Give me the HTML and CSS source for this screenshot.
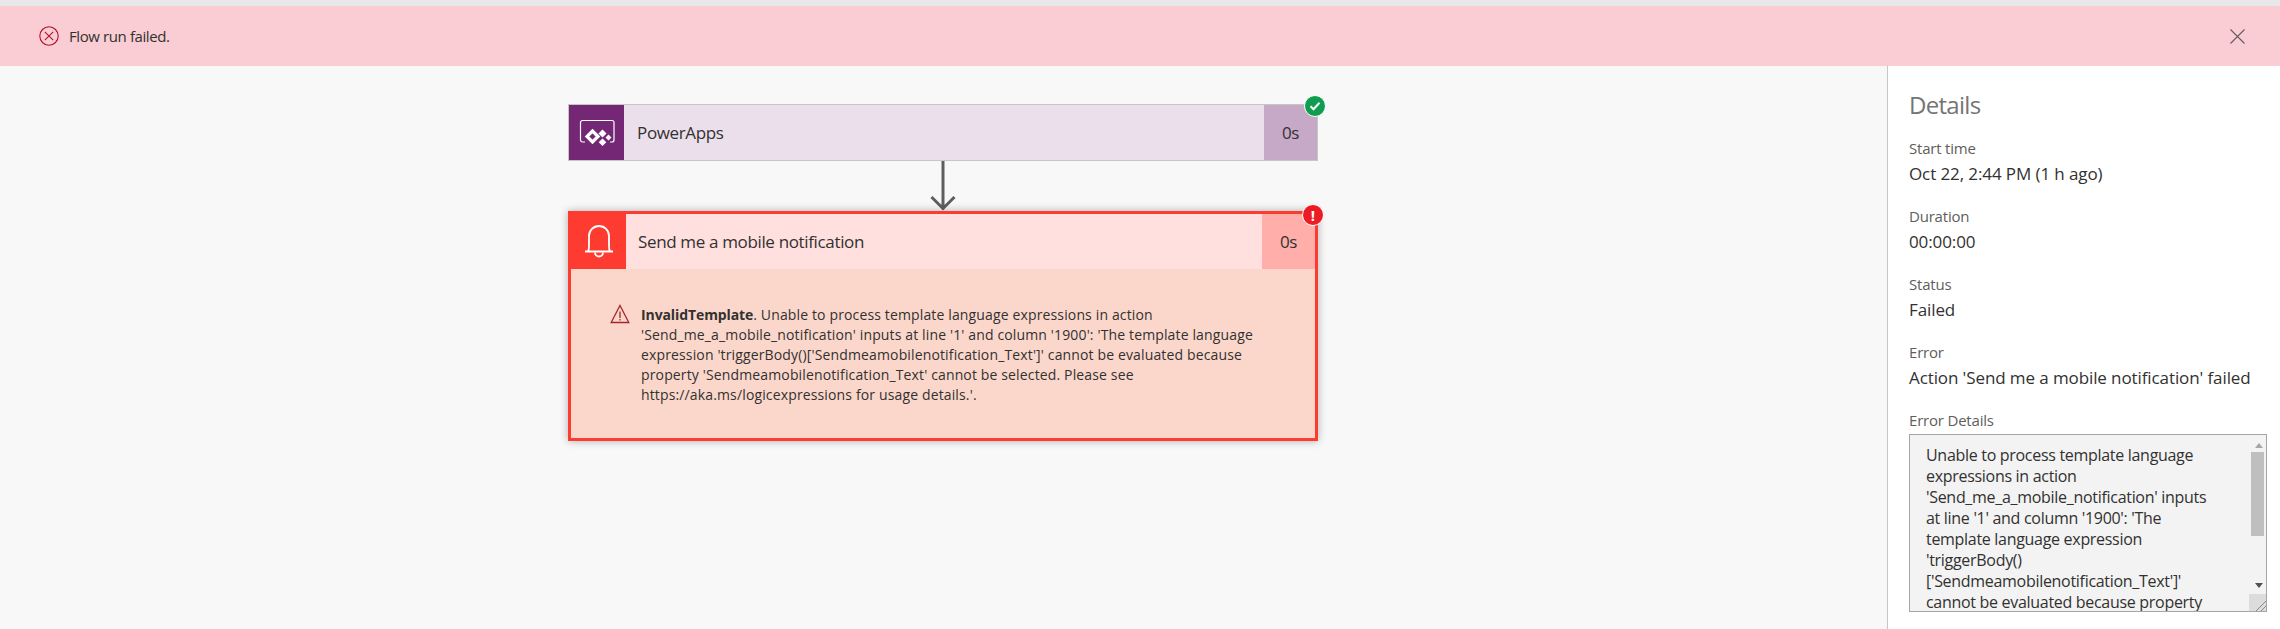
FILE: index.html
```html
<!DOCTYPE html>
<html lang="en">
<head>
<meta charset="utf-8">
<title>Flow run failed</title>
<link rel="stylesheet" href="styles.css">
</head>
<body>
<div class="topstrip"></div>
<header class="banner">
  <svg class="banner-icon" width="20" height="20" viewBox="0 0 20 20"><circle cx="10" cy="10" r="9.200" fill="none" stroke="#b3122a" stroke-width="1.100"/><path d="M5.800 5.800l8.400 8.400M14.200 5.800l-8.400 8.400" stroke="#b3122a" stroke-width="1.100"/></svg>
  <span class="banner-text">Flow run failed.</span>
  <svg class="banner-close" width="15" height="15" viewBox="0 0 15 15"><path d="M.5.5l14 14M14.500.5l-14 14" stroke="#605e5c" stroke-width="1.100"/></svg>
</header>
<div class="main">
  <section class="canvas">
    <div class="card card-ok">
      <div class="tile tile-purple">
        <svg width="36" height="28" viewBox="0 0 36 28" fill="none"><path d="M6 23H3.500a2 2 0 0 1-2-2V3.500a2 2 0 0 1 2-2H33a2 2 0 0 1 2 2V21a2 2 0 0 1-2 2h-2" stroke="#fff" stroke-width="1.200"/><path d="M13.500 12l5.500 5.500-5.500 5.500L8 17.500z" stroke="#fff" stroke-width="3.200"/><path d="M23.500 10.500l4 4-4 4-4-4zM23.500 19.500l3.800 3.800-3.800 3.800-3.800-3.800zM29.500 15.500l3 3-3 3-3-3z" fill="#fff"/></svg>
      </div>
      <div class="card-title">PowerApps</div>
      <div class="dur dur-purple">0s</div>
      <span class="badge badge-ok"><svg width="12" height="10" viewBox="0 0 12 10"><path d="M1.500 5.200l3 3 6-6.400" fill="none" stroke="#fff" stroke-width="2"/></svg></span>
    </div>
    <svg class="arrow" width="26" height="50" viewBox="0 0 26 50"><path d="M13 0v47M1.500 36L13 47.500 24.500 36" fill="none" stroke="#605e5c" stroke-width="3"/></svg>
    <div class="card card-err">
      <div class="err-head">
        <div class="tile tile-red">
          <svg width="28" height="34" viewBox="0 0 28 34" fill="none" stroke="#fff" stroke-width="1.800"><path d="M0 26.500h28M3 26c1-1 1-3 1-5V11a10 10 0 0 1 20 0v10c0 2 0 4 1 5"/><path d="M10 27.500a4 4 0 0 0 8 0"/></svg>
        </div>
        <div class="card-title card-title-err">Send me a mobile notification</div>
        <div class="dur dur-red">0s</div>
      </div>
      <div class="err-body">
        <svg class="warn" width="20" height="20" viewBox="0 0 20 20" fill="none" stroke="#a4262c" stroke-width="1.300"><path d="M10 1.500L18.800 18.500H1.200z"/><path d="M10 7.500v6.500M10 15v1.500"/></svg>
        <p class="err-text"><b>InvalidTemplate</b>. Unable to process template language expressions in action<br>'Send_me_a_mobile_notification' inputs at line '1' and column '1900': 'The template language<br>expression 'triggerBody()['Sendmeamobilenotification_Text']' cannot be evaluated because<br>property 'Sendmeamobilenotification_Text' cannot be selected. Please see<br>https://aka.ms/logicexpressions for usage details.'.</p>
      </div>
      <span class="badge badge-err">!</span>
    </div>
  </section>
  <aside class="panel">
    <h2 class="panel-title">Details</h2>
    <div class="field"><div class="label">Start time</div><div class="value">Oct 22, 2:44 PM (1 h ago)</div></div>
    <div class="field"><div class="label">Duration</div><div class="value">00:00:00</div></div>
    <div class="field"><div class="label">Status</div><div class="value">Failed</div></div>
    <div class="field"><div class="label">Error</div><div class="value">Action 'Send me a mobile notification' failed</div></div>
    <div class="field"><div class="label">Error Details</div>
      <div class="errbox">
        <div class="errbox-text">Unable to process template language<br>expressions in action<br>'Send_me_a_mobile_notification' inputs<br>at line '1' and column '1900': 'The<br>template language expression<br>'triggerBody()<br>['Sendmeamobilenotification_Text']'<br>cannot be evaluated because property</div>
        <div class="sb">
          <svg class="sb-up" width="8" height="5" viewBox="0 0 8 5"><path d="M4 0l4 5H0z" fill="#a6a6a6"/></svg>
          <div class="sb-thumb"></div>
          <svg class="sb-down" width="8" height="5" viewBox="0 0 8 5"><path d="M0 0h8L4 5z" fill="#505050"/></svg>
          <div class="sb-corner"><svg width="11" height="11" viewBox="0 0 11 11"><path d="M1 11L11 1M6 11l5-5" stroke="#8a8a8a" stroke-width="1"/></svg></div>
        </div>
      </div>
    </div>
  </aside>
</div>
</body>
</html>
```
FILE: styles.css
```css
* { box-sizing: border-box; }
html, body { margin: 0; height: 629px; overflow: hidden; }
body { font-family: "Open Sans", "Noto Sans", sans-serif; color: #323130; background: #f8f8f8; }
.topstrip { height: 6px; background: #e8e8e8; }
.banner { height: 60px; background: #f9cdd3; display: flex; align-items: center; padding: 0 35px 0 39px; }
.banner-icon { flex: none; margin-right: 10px; }
.banner-text { font-size: 15px; letter-spacing: -.4px; flex: 1; }
.banner-close { flex: none; }
.main { display: flex; height: 563px; }
.canvas { width: 1887px; flex: none; display: flex; flex-direction: column; align-items: center; padding: 38px 1px 0 0; }
.card { width: 750px; position: relative; display: flex; }
.card-ok { height: 57px; background: #ebdfec; border: 1px solid #c8c6c4; }
.tile { flex: none; display: flex; align-items: center; justify-content: center; }
.tile-purple { width: 55px; background: #742774; }
.card-title { flex: 1; font-size: 17px; letter-spacing: -.35px; padding-left: 13px; display: flex; align-items: center; }
.card-title-err { padding-left: 12px; }
.dur { flex: none; display: flex; align-items: center; justify-content: center; font-size: 17px; letter-spacing: -.3px; }
.dur-purple { width: 53px; background: #c6a9c6; }
.arrow { display: block; flex: none; }
.card-err { height: 230px; flex-direction: column; border: 3px solid #fe3b30; background: #fbd7cb; box-shadow: 0 0 8px rgba(0,0,0,.3); }
.err-head { height: 55px; flex: none; display: flex; background: #ffe0de; }
.tile-red { width: 55px; background: #fe3b30; }
.dur-red { width: 53px; background: #ffaeaa; }
.err-body { display: flex; padding: 35px 0 0 39px; }
.warn { flex: none; margin: 0 11px 0 0; }
.err-text { margin: 1px 0 0; font-size: 14px; line-height: 20px; letter-spacing: .14px; }
.err-text b { font-weight: 700; letter-spacing: -.1px; }
.badge { position: absolute; border-radius: 50%; display: flex; align-items: center; justify-content: center; color: #fff; border: 1px solid #fff; }
.badge-ok { width: 22px; height: 22px; top: -10px; right: -9px; background: #0f9d50; }
.badge-err { width: 22px; height: 22px; top: -10px; right: -9px; background: #ed1c24; font-weight: 700; font-size: 15px; }
.panel { flex: 1; background: #fff; border-left: 1px solid #c8c6c4; padding: 23px 13px 0 21px; overflow: hidden; }
.panel-title { margin: 0 0 17px; font-size: 24px; font-weight: 400; line-height: 32px; letter-spacing: -.7px; color: #757575; }
.field { margin-bottom: 20px; }
.label { font-size: 15px; line-height: 20px; letter-spacing: -.2px; color: #605e5c; }
.value { font-size: 17px; line-height: 24px; margin-top: 4px; letter-spacing: -.1px; }
.errbox { position: relative; height: 178px; margin-top: 4px; background: #f3f3f3; border: 1px solid #a6a6a6; padding: 10px 0 0 16px; overflow: hidden; }
.errbox-text { font-size: 16px; line-height: 21px; letter-spacing: -.3px; white-space: nowrap; }
.sb { position: absolute; top: 0; right: 0; bottom: 0; width: 17px; background: #f3f3f3; }
.sb-up { position: absolute; top: 8px; left: 6px; }
.sb-thumb { position: absolute; top: 17px; left: 2px; width: 13px; height: 84px; background: #bfbfbf; }
.sb-down { position: absolute; top: 148px; left: 6px; }
.sb-corner { position: absolute; bottom: 0; left: 0; width: 17px; height: 17px; background: #dcdcdc; display: flex; align-items: flex-end; justify-content: flex-end; }
```
